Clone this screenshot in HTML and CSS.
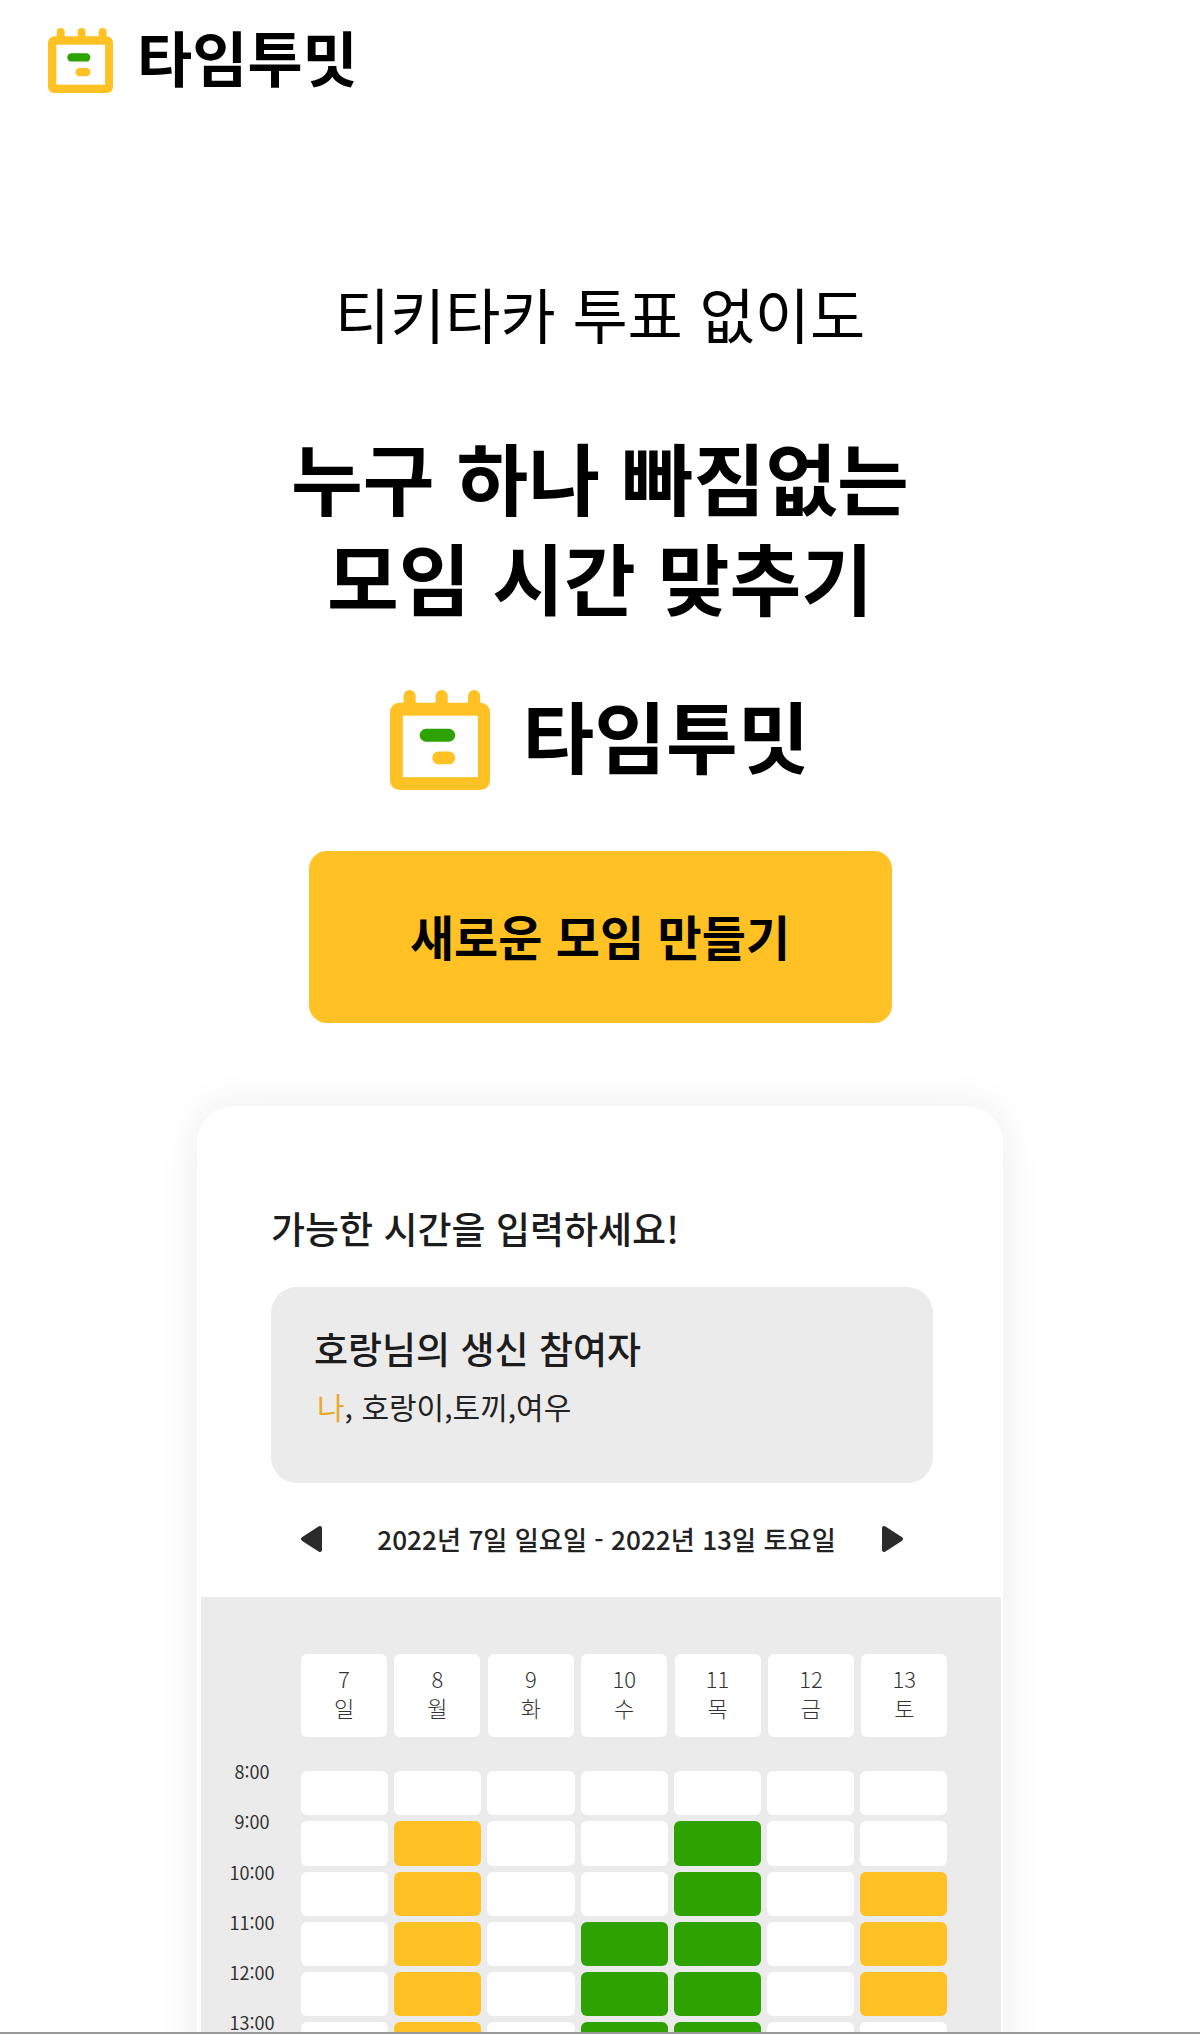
FILE: index.html
```html
<!DOCTYPE html>
<html lang="ko">
<head>
    <meta charset="UTF-8">
    <meta name="viewport" content="width=device-width, initial-scale=1.0">
    <title>타임투밋</title>
    <link rel="stylesheet" href="styles.css">
</head>
<body>
    <svg class="defs" width="0" height="0">
        <symbol id="logo" viewBox="0 0 296 296">
            <rect x="40" y="0" width="36" height="80" rx="18" fill="#ffc124"/>
            <rect x="135" y="0" width="36" height="80" rx="18" fill="#ffc124"/>
            <rect x="231" y="0" width="36" height="80" rx="18" fill="#ffc124"/>
            <rect x="0" y="38" width="296" height="258" rx="28" fill="#ffc124"/>
            <rect x="38" y="76" width="222" height="182" fill="#fff"/>
            <rect x="88" y="115" width="105" height="38" rx="19" fill="#2ea200"/>
            <rect x="125" y="182" width="68" height="38" rx="19" fill="#ffc124"/>
        </symbol>
    </svg>

    <div class="page">
        <header class="top-bar">
            <svg class="top-logo"><use href="#logo"/></svg>
            <span class="top-name">타임투밋</span>
        </header>

        <main class="hero">
            <p class="sub">티키타카 투표 없이도</p>
            <h1>누구 하나 빠짐없는<br>모임 시간 맞추기</h1>
            <div class="brand">
                <svg class="brand-logo"><use href="#logo"/></svg>
                <span class="brand-name">타임투밋</span>
            </div>
            <button class="cta">새로운 모임 만들기</button>

            <section class="card">
                <h2>가능한 시간을 입력하세요!</h2>
                <div class="people">
                    <h3>호랑님의 생신 참여자</h3>
                    <p><span class="me">나</span>, 호랑이,토끼,여우</p>
                </div>
                <div class="week-nav">
                    <svg class="arrow" viewBox="0 0 24 28"><path d="M20 3 L3 14 L20 25 Z"/></svg>
                    <span class="week-label">2022년 7일 일요일 - 2022년 13일 토요일</span>
                    <svg class="arrow" viewBox="0 0 24 28"><path d="M4 3 L21 14 L4 25 Z"/></svg>
                </div>

                <div class="schedule">
                    <div class="days">
                        <div class="day">7<br>일</div>
                        <div class="day">8<br>월</div>
                        <div class="day">9<br>화</div>
                        <div class="day">10<br>수</div>
                        <div class="day">11<br>목</div>
                        <div class="day">12<br>금</div>
                        <div class="day">13<br>토</div>
                    </div>
                    <div class="slots">
                        <div class="time">8:00</div>
                        <div class="slot"></div><div class="slot"></div><div class="slot"></div><div class="slot"></div><div class="slot"></div><div class="slot"></div><div class="slot"></div>

                        <div class="time">9:00</div>
                        <div class="slot"></div><div class="slot me-on"></div><div class="slot"></div><div class="slot"></div><div class="slot all-on"></div><div class="slot"></div><div class="slot"></div>

                        <div class="time">10:00</div>
                        <div class="slot"></div><div class="slot me-on"></div><div class="slot"></div><div class="slot"></div><div class="slot all-on"></div><div class="slot"></div><div class="slot me-on"></div>

                        <div class="time">11:00</div>
                        <div class="slot"></div><div class="slot me-on"></div><div class="slot"></div><div class="slot all-on"></div><div class="slot all-on"></div><div class="slot"></div><div class="slot me-on"></div>

                        <div class="time">12:00</div>
                        <div class="slot"></div><div class="slot me-on"></div><div class="slot"></div><div class="slot all-on"></div><div class="slot all-on"></div><div class="slot"></div><div class="slot me-on"></div>

                        <div class="time">13:00</div>
                        <div class="slot"></div><div class="slot me-on"></div><div class="slot"></div><div class="slot all-on"></div><div class="slot all-on"></div><div class="slot"></div><div class="slot"></div>
                    </div>
                </div>
            </section>
        </main>

        <div class="bottom-line"></div>
    </div>
</body>
</html>
```

FILE: styles.css
```css
* {
    box-sizing: border-box;
}

body {
    margin: 0;
    background-color: white;
    color: #000;
    font-family: "Noto Sans CJK KR", "Noto Sans", sans-serif;
}

.defs {
    display: block;
    height: 0;
}

.page {
    display: flex;
    flex-direction: column;
    height: 2034px;
    overflow: hidden;
}

.top-bar {
    display: flex;
    align-items: center;
    gap: 24px;
    height: 120px;
    padding-left: 48px;
    flex: none;
}

.top-logo {
    width: 65px;
    height: 65px;
}

.top-name {
    margin-bottom: 8px;
    font-size: 60px;
    font-weight: 700;
    line-height: 1;
}

.hero {
    display: flex;
    flex-direction: column;
    align-items: center;
    flex: 1;
    min-height: 0;
    overflow: hidden;
}

.sub {
    margin: 149px 0 0;
    font-size: 60px;
    line-height: 88px;
}

h1 {
    margin: 69px 0 0;
    font-size: 78px;
    font-weight: 700;
    line-height: 100px;
    text-align: center;
}

.brand {
    display: flex;
    align-items: center;
    gap: 32px;
    margin-top: 64px;
}

.brand-logo {
    width: 100px;
    height: 100px;
}

.brand-name {
    margin-bottom: 13px;
    font-size: 78px;
    font-weight: 700;
    line-height: 80px;
}

.cta {
    width: 583px;
    height: 172px;
    margin-top: 61px;
    padding-bottom: 5px;
    flex: none;
    background-color: #ffc124;
    border: none;
    border-radius: 18px;
    font-family: inherit;
    font-size: 48px;
    font-weight: 700;
    color: #000;
}

.card {
    width: 806px;
    margin-top: 83px;
    padding: 96px 2px 0 4px;
    flex: none;
    background-color: white;
    border-radius: 36px 36px 0 0;
    box-shadow: 0 0 40px rgba(0,0,0,0.08);
}

h2 {
    margin: 0 0 0 70px;
    font-size: 37px;
    font-weight: 500;
    line-height: 52px;
    color: #1c1c1c;
}

.people {
    width: 662px;
    height: 196px;
    margin: 33px 0 0 70px;
    padding: 36px 43px 0;
    background-color: #ebebeb;
    border-radius: 26px;
}

h3 {
    margin: 0;
    font-size: 37px;
    font-weight: 500;
    line-height: 50px;
    color: #1c1c1c;
}

.people p {
    margin: 11px 0 0 3px;
    font-size: 30px;
    line-height: 44px;
    color: #222;
}

.me {
    color: #e8a92c;
}

.week-nav {
    display: flex;
    align-items: center;
    justify-content: space-between;
    width: 604px;
    height: 114px;
    margin-left: 99px;
    padding-bottom: 2px;
    font-size: 26.2px;
    font-weight: 500;
    color: #222;
}

.week-label {
    margin-left: 9px;
}

.arrow {
    width: 24px;
    height: 28px;
    fill: #2b2b2b;
    stroke: #2b2b2b;
    stroke-width: 4;
    stroke-linejoin: round;
}

.schedule {
    height: 500px;
    padding-top: 57px;
    background-color: #ebebeb;
}

.days {
    display: grid;
    grid-template-columns: repeat(7, 86px);
    gap: 7.4px;
    padding-left: 100px;
}

.day {
    height: 83px;
    padding-top: 10px;
    background-color: white;
    border-radius: 6px;
    font-size: 22px;
    font-weight: 300;
    line-height: 29px;
    text-align: center;
    color: #333;
}

.slots {
    display: grid;
    grid-template-columns: 86px repeat(7, 87.2px);
    grid-auto-rows: 44.3px;
    gap: 6px;
    margin-top: 34px;
    padding-left: 8px;
}

.time {
    margin-top: -12px;
    font-size: 18px;
    line-height: 24px;
    text-align: center;
    color: #333;
}

.slot {
    background-color: white;
    border-radius: 6px;
}

.me-on {
    background-color: #ffc124;
}

.all-on {
    background-color: #2ea200;
}

.bottom-line {
    height: 2px;
    flex: none;
    background-color: #999;
}
```
